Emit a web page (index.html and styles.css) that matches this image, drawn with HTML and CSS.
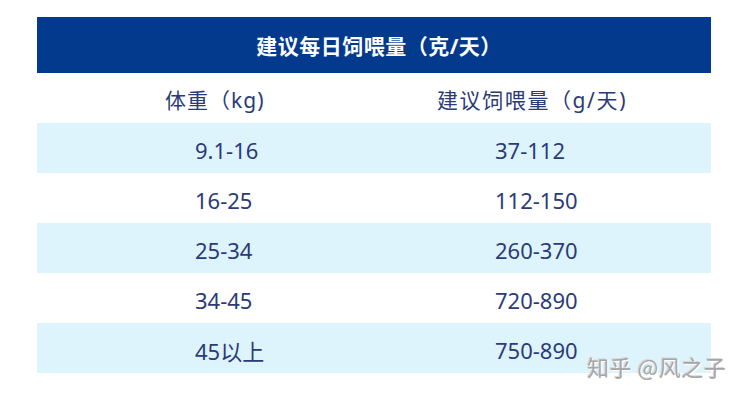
FILE: index.html
```html
<!DOCTYPE html>
<html lang="zh">
<head>
<meta charset="utf-8">
<link rel="stylesheet" href="styles.css">
</head>
<body>
<div class="page">
  <div class="table">
    <div class="title">建议每日饲喂量（克/天）</div>
    <div class="row head">
      <div class="cell c1">体重（kg)</div>
      <div class="cell c2">建议饲喂量（g/天)</div>
    </div>
    <div class="row alt">
      <div class="cell c1">9.1-16</div>
      <div class="cell c2">37-112</div>
    </div>
    <div class="row">
      <div class="cell c1">16-25</div>
      <div class="cell c2">112-150</div>
    </div>
    <div class="row alt">
      <div class="cell c1">25-34</div>
      <div class="cell c2">260-370</div>
    </div>
    <div class="row">
      <div class="cell c1">34-45</div>
      <div class="cell c2">720-890</div>
    </div>
    <div class="row alt">
      <div class="cell c1">45以上</div>
      <div class="cell c2">750-890</div>
    </div>
  </div>
  <div class="watermark">知乎 @风之子</div>
</div>
</body>
</html>
```

FILE: styles.css
```css
html, body {
  margin: 0;
  padding: 0;
  background: #ffffff;
}
.page {
  position: relative;
  width: 747px;
  height: 400px;
  padding: 17px 0 0 37px;
  box-sizing: border-box;
  font-family: "Noto Sans", "Noto Sans CJK SC", sans-serif;
}
.table {
  width: 674px;
  display: flex;
  flex-direction: column;
}
.title {
  height: 56px;
  background: #033a8e;
  color: #ffffff;
  font-weight: 700;
  font-size: 21px;
  letter-spacing: 0.5px;
  display: flex;
  align-items: center;
  justify-content: center;
  padding-left: 10px;
  box-sizing: border-box;
}
.row {
  height: 50px;
  display: flex;
  align-items: center;
  color: #2b3b78;
  font-size: 22px;
}
.row.alt {
  background: #def4fd;
}
.cell {
  box-sizing: border-box;
  white-space: nowrap;
  padding-top: 4px;
}
.c1 {
  width: 337px;
  padding-left: 158px;
}
.c2 {
  padding-left: 121px;
}
.head .cell {
  font-size: 21px;
  letter-spacing: 1px;
  padding-top: 2px;
}
.head .c1 {
  padding-left: 128px;
}
.head .c2 {
  padding-left: 63px;
  letter-spacing: 1.6px;
}
.watermark {
  position: absolute;
  left: 587px;
  top: 350px;
  font-size: 22px;
  letter-spacing: 0.5px;
  color: #a6a6a6;
  text-shadow: 1px 1px 0 #ffffff, -1px -1px 0 #d8d8d8;
  font-family: "Noto Sans CJK SC", sans-serif;
}
```
